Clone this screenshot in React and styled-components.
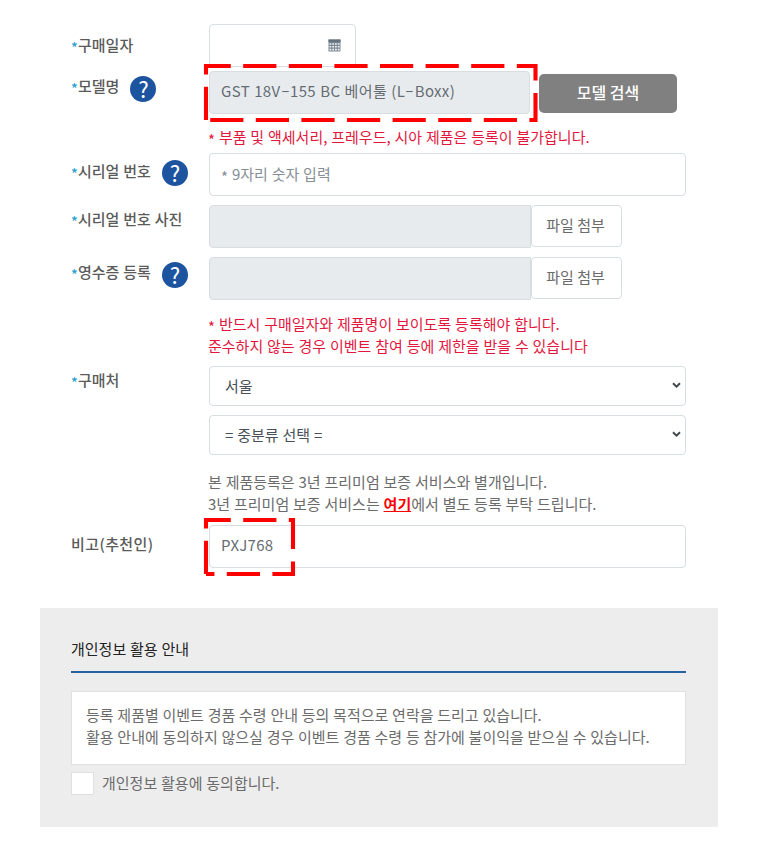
import React from "react";
import styled, { createGlobalStyle, css } from "styled-components";

const App = () => {
  return (
    <Page>
      <GlobalStyle />
      <Form>
        <Row height={47}>
          <Label top={10} required>
            구매일자
          </Label>
          <DateInput>
            <CalendarIcon />
          </DateInput>
        </Row>

        <Row height={82}>
          <Label top={4} required help={3}>
            모델명
          </Label>
          <Field>
            <Line>
              <Marked>
                <Input disabled width={321} spacing={0.35} lineHeight={38}>
                  GST 18V<Hyphen>-</Hyphen>155 BC 베어툴 (L<Hyphen>-</Hyphen>Boxx)
                </Input>
                <Outline width={329.5} height={54} left={-3} top={-5} />
              </Marked>
              <SearchButton>모델 검색</SearchButton>
            </Line>
            <Notice top={12}>
              <Asterisk>*</Asterisk> 부품 및 액세서리, 프레우드, 시아 제품은
              등록이 불가합니다.
            </Notice>
          </Field>
        </Row>

        <Row height={52}>
          <Label top={7} required help={2}>
            시리얼 번호
          </Label>
          <Input width={477} placeholder="true" lineHeight={39}>
            <Asterisk>*</Asterisk> 9자리 숫자 입력
          </Input>
        </Row>

        <Row height={52}>
          <Label top={3} required>
            시리얼 번호 사진
          </Label>
          <Line>
            <Input disabled flat width={322} />
            <FileButton>파일 첨부</FileButton>
          </Line>
        </Row>

        <Row height={109}>
          <Label top={4} required help={3}>
            영수증 등록
          </Label>
          <Field>
            <Line>
              <Input disabled flat width={322} />
              <FileButton>파일 첨부</FileButton>
            </Line>
            <Notice top={13}>
              <Asterisk>*</Asterisk> 반드시 구매일자와 제품명이 보이도록
              등록해야 합니다.
              <br />
              준수하지 않는 경우 이벤트 참여 등에 제한을 받을 수 있습니다
            </Notice>
          </Field>
        </Row>

        <Row height={159}>
          <Label top={3} required>
            구매처
          </Label>
          <Field>
            <Select>
              서울
              <Arrow />
            </Select>
            <Select>
              = 중분류 선택 =
              <Arrow />
            </Select>
            <Info>
              본 제품등록은 3년 프리미엄 보증 서비스와 별개입니다.
              <br />
              3년 프리미엄 보증 서비스는 <Here>여기</Here>에서 별도 등록 부탁
              드립니다.
            </Info>
          </Field>
        </Row>

        <Row height={83}>
          <Label top={8} spacing={0.4}>
            비고(추천인)
          </Label>
          <Marked>
            <Input width={477} spacing={0.3} lineHeight={37}>
              PXJ768
            </Input>
            <Outline width={87} height={54} left={-3} top={-5} />
          </Marked>
        </Row>
      </Form>

      <Privacy>
        <PrivacyTitle>개인정보 활용 안내</PrivacyTitle>
        <PrivacyText>
          등록 제품별 이벤트 경품 수령 안내 등의 목적으로 연락을 드리고 있습니다.
          <br />
          활용 안내에 동의하지 않으실 경우 이벤트 경품 수령 등 참가에 불이익을
          받으실 수 있습니다.
        </PrivacyText>
        <Agree>
          <CheckBox />
          <AgreeText>개인정보 활용에 동의합니다.</AgreeText>
        </Agree>
      </Privacy>
    </Page>
  );
};

export default App;

const Label = ({ top, required, help, spacing, children }) => (
  <LabelCell $top={top}>
    {required && <Star>*</Star>}
    <LabelText $spacing={spacing}>{children}</LabelText>
    {help && <Help $shift={help}>?</Help>}
  </LabelCell>
);

const Row = ({ height, children }) => <RowBox $height={height}>{children}</RowBox>;

const Input = ({
  width,
  disabled,
  flat,
  placeholder,
  spacing,
  lineHeight,
  children,
}) => (
  <InputBox
    $width={width}
    $disabled={disabled}
    $flat={flat}
    $placeholder={placeholder}
    $spacing={spacing}
    $lineHeight={lineHeight}
  >
    {children}
  </InputBox>
);

const Notice = ({ top, children }) => <NoticeText $top={top}>{children}</NoticeText>;

// Dashed red marker, drawn clockwise from the bottom left corner
const Outline = ({ width, height, left, top }) => (
  <OutlineSvg
    $left={left}
    $top={top}
    width={width + 6}
    height={height + 6}
    viewBox={`-3 -3 ${width + 6} ${height + 6}`}
  >
    <path
      d={`M0 ${height}V0H${width}V${height}H0`}
      fill="none"
      stroke="#ff0000"
      strokeWidth="4.1"
      strokeDasharray="33.2 12.4"
    />
  </OutlineSvg>
);

const CalendarIcon = () => (
  <svg width="13" height="13" viewBox="0 0 13 13">
    <path d="M0.5 0.5h12v12h-12z" fill="#7b8894" />
    <path d="M0.5 0.5h12v2.7h-12z" fill="#66737f" />
    <path
      d="M1.5 4.2h1.8v1.6h-1.8zM4.3 4.2h1.8v1.6h-1.8zM7 4.2h1.8v1.6h-1.8zM9.8 4.2h1.8v1.6h-1.8zM1.5 7h1.8v1.6h-1.8zM4.3 7h1.8v1.6h-1.8zM7 7h1.8v1.6h-1.8zM9.8 7h1.8v1.6h-1.8zM1.5 9.8h1.8v1.6h-1.8zM4.3 9.8h1.8v1.6h-1.8zM7 9.8h1.8v1.6h-1.8zM9.8 9.8h1.8v1.6h-1.8z"
      fill="#eef1f3"
    />
  </svg>
);

const Arrow = () => (
  <svg width="9" height="7" viewBox="0 0 9 7">
    <path d="M1 1.3l3.5 3.4 3.5-3.4" fill="none" stroke="#40474d" strokeWidth="2" />
  </svg>
);

// Styled here

const GlobalStyle = createGlobalStyle`
  * {
    box-sizing: border-box;
  }

  body {
    margin: 0;
    background: #fff;
  }
`;

const Page = styled.div`
  width: 764px;
  height: 846px;
  padding: 24px 46px 0 40px;
  overflow: hidden;
  background: #fff;
  color: #6b6b6b;
  font-family: "Noto Sans CJK KR", sans-serif;
  font-size: 15px;
  line-height: 22px;
  word-spacing: 0.5px;
  white-space: nowrap;
`;

const Form = styled.div`
  padding: 0 32px 0 31px;
`;

const RowBox = styled.div`
  display: grid;
  grid-template-columns: 138px 477px;
  align-items: start;
  height: ${(props) => props.$height}px;
`;

const LabelCell = styled.div`
  display: flex;
  align-items: flex-start;
  padding-top: ${(props) => props.$top}px;
`;

const Star = styled.span`
  width: 7px;
  padding-top: 2px;
  color: #2a9fd0;
  font-size: 14px;
  font-weight: 500;
`;

const LabelText = styled.span`
  color: #5a5a5a;
  font-weight: 500;
  letter-spacing: ${(props) => props.$spacing || 0}px;
`;

const Help = styled.span`
  width: 26px;
  height: 26px;
  margin: ${(props) => props.$shift - 2}px 0 0 11px;
  border-radius: 50%;
  background: #1d549f;
  color: #fff;
  font-size: 22px;
  line-height: 24px;
  text-align: center;
`;

// the star sits on the middle of the text line
const Asterisk = styled.span`
  display: inline-block;
  line-height: 1;
  transform: translateY(3px);
`;

const Hyphen = styled.span`
  display: inline-block;
  width: 9.5px;
  line-height: 1;
  text-align: center;
  transform: translateY(-1px) scaleX(1.7);
`;

const Field = styled.div`
  display: flex;
  flex-direction: column;
`;

const Line = styled.div`
  display: flex;
  align-items: flex-start;
`;

const Marked = styled.div`
  position: relative;
`;

const box = css`
  border: 1px solid #d8dde2;
  border-radius: 4px;
  background: #fff;
`;

const DateInput = styled.div`
  ${box}
  display: flex;
  align-items: center;
  justify-content: flex-end;
  width: 147px;
  height: 43px;
  padding-right: 14px;
`;

const InputBox = styled.div`
  ${box}
  width: ${(props) => props.$width}px;
  height: 43px;
  padding: 0 11px;
  line-height: ${(props) => props.$lineHeight || 41}px;
  letter-spacing: ${(props) => props.$spacing || 0}px;
  color: ${(props) => (props.$placeholder ? "#868e96" : "#656c72")};
  ${(props) =>
    props.$disabled &&
    css`
      background: #e8ebee;
    `}
  ${(props) =>
    props.$flat &&
    css`
      border-radius: 4px 0 0 4px;
    `}
`;

const OutlineSvg = styled.svg`
  position: absolute;
  left: ${(props) => props.$left - 3}px;
  top: ${(props) => props.$top - 3}px;
`;

const SearchButton = styled.button`
  width: 138px;
  height: 39px;
  margin: 3px 0 0 9px;
  padding: 0 0 3px;
  border: none;
  border-radius: 5px;
  background: #808080;
  color: #fff;
  font: inherit;
  font-size: 16px;
  font-weight: 500;
`;

const FileButton = styled.button`
  ${box}
  width: 91px;
  height: 42px;
  padding: 0 2px 2px 0;
  color: #6b6b6b;
  font: inherit;
`;

const NoticeText = styled.p`
  margin: ${(props) => props.$top}px 0 0 -1px;
  color: #e3173e;
`;

const Select = styled.div`
  ${box}
  display: flex;
  align-items: center;
  justify-content: space-between;
  height: 40px;
  margin-bottom: 9px;
  padding: 0 4px 1px 15px;
  color: #495057;
`;

const Info = styled.p`
  margin: 7px 0 0 -1px;
`;

const Here = styled.a`
  color: #f00;
  font-weight: 700;
  text-decoration: underline;
`;

const Privacy = styled.section`
  width: 678px;
  height: 219px;
  padding: 30px 32px 0 31px;
  background: #ededed;
`;

const PrivacyTitle = styled.h2`
  height: 35px;
  margin: 0 0 18px;
  border-bottom: 2px solid #2860a5;
  color: #222;
  font-size: 15px;
  font-weight: 400;
`;

const PrivacyText = styled.div`
  height: 74px;
  padding: 12px 14px;
  border: 1px solid #e0e0e0;
  background: #fff;
  word-spacing: 0.4px;
`;

const Agree = styled.label`
  display: flex;
  align-items: flex-start;
  gap: 8px;
  margin-top: 7px;
`;

const AgreeText = styled.span`
  line-height: 21px;
`;

const CheckBox = styled.span`
  width: 23px;
  height: 23px;
  border: 1px solid #e0e0e0;
  background: #fff;
`;
